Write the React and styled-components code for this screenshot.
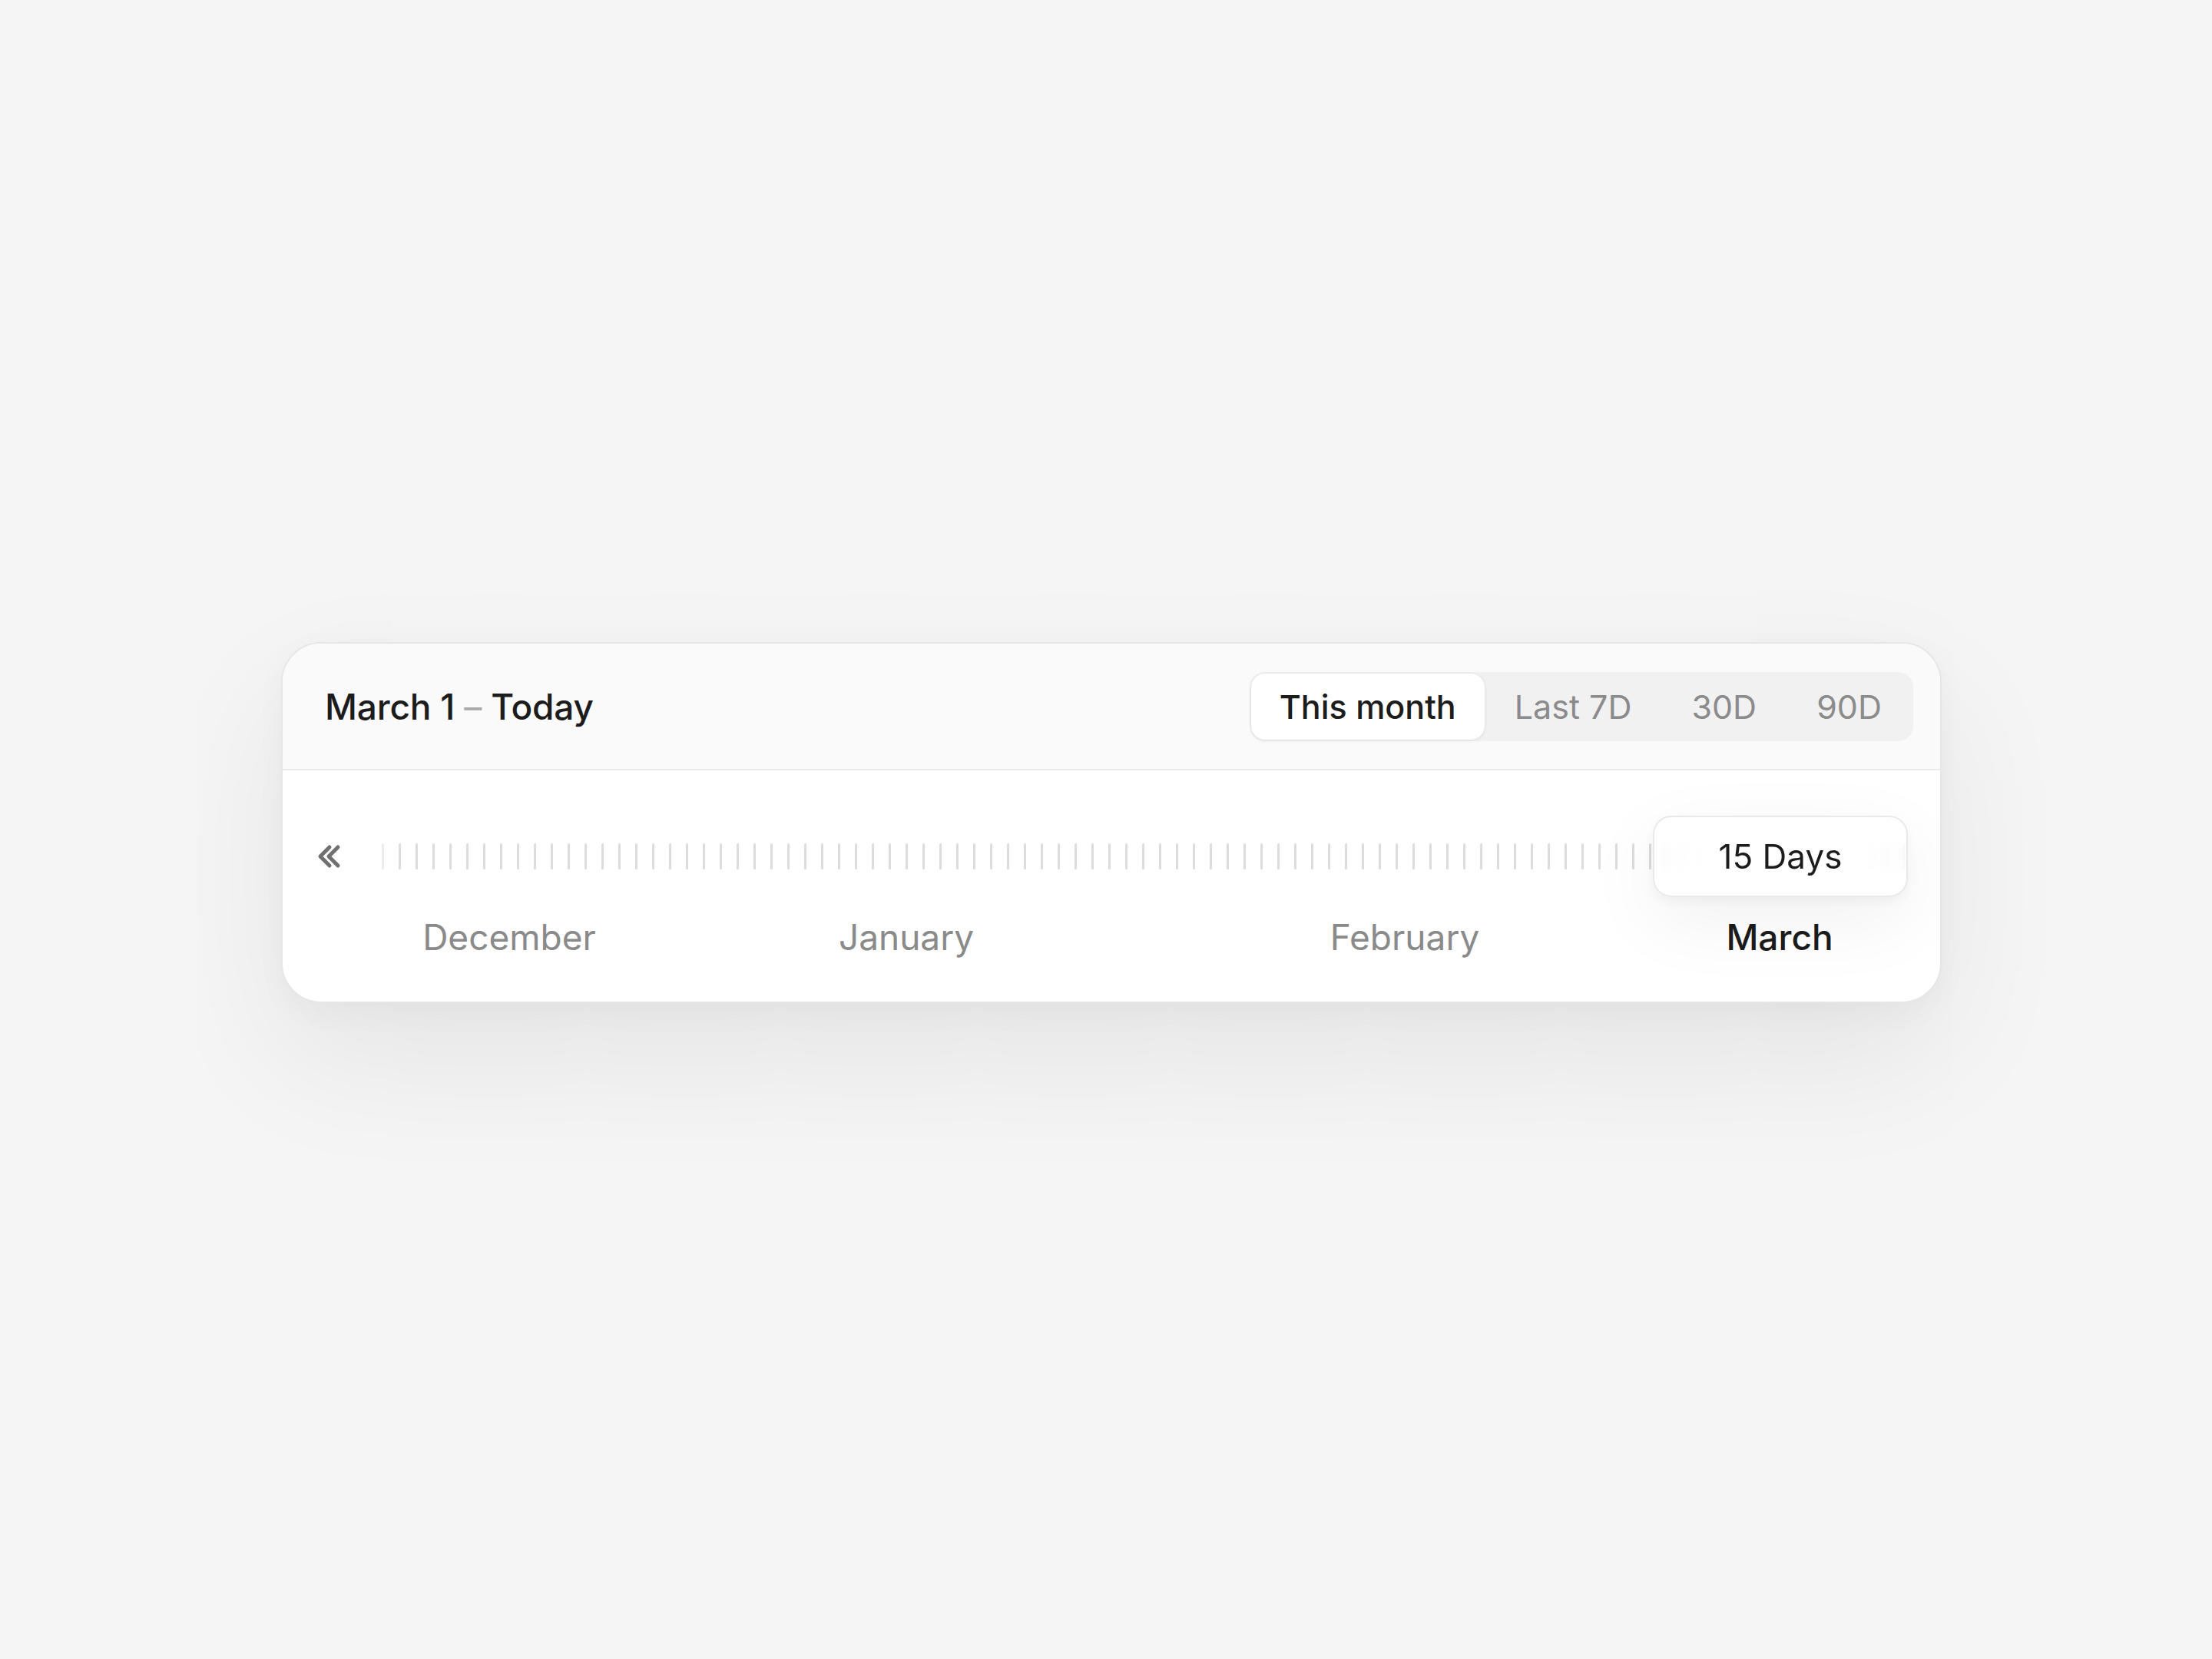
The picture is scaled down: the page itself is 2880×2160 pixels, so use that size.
import React from "react";
import styled, { createGlobalStyle } from "styled-components";

const Global = createGlobalStyle`
  html, body { margin: 0; padding: 0; background: #f5f5f5; }
  body { font-family: Inter, "Noto Sans", sans-serif; -webkit-font-smoothing: antialiased; }
`;

const Page = styled.div`
  min-height: 2160px;
  box-sizing: border-box;
  display: flex;
  flex-direction: column;
  align-items: center;
  padding-top: 836px;
  padding-left: 14px;
`;

const Card = styled.div`
  width: 2162px;
  box-sizing: border-box;
  background: #ffffff;
  border: 2px solid #e6e6e6;
  border-radius: 52px;
  overflow: hidden;
  box-shadow: 0 70px 180px rgba(0, 0, 0, 0.07), 0 12px 40px rgba(0, 0, 0, 0.035);
`;

const Header = styled.div`
  height: 165px;
  box-sizing: border-box;
  display: flex;
  align-items: center;
  justify-content: space-between;
  padding: 0 35px 0 55px;
  background: #fafafa;
  border-bottom: 2px solid #ebebeb;
`;

const Title = styled.div`
  font-size: 46px;
  font-weight: 500;
  color: #1c1c1c;
  letter-spacing: -0.2px;
`;

const Dash = styled.span`
  color: #a9a9a9;
  font-weight: 400;
`;

const Segmented = styled.div`
  display: flex;
  align-items: stretch;
  height: 90px;
  box-sizing: border-box;
  padding: 2px;
  background: #f1f1f1;
  border-radius: 20px;
`;

const Segment = styled.button`
  border: none;
  outline: none;
  font-family: inherit;
  font-size: 43px;
  font-weight: ${(p) => (p.$active ? 500 : 400)};
  color: ${(p) => (p.$active ? "#1c1c1c" : "#8b8b8b")};
  background: ${(p) => (p.$active ? "#ffffff" : "transparent")};
  border-radius: 18px;
  padding: 0 ${(p) => (p.$active ? 37 : 39)}px;
  box-shadow: ${(p) => (p.$active ? "0 1px 5px rgba(0,0,0,0.08), 0 0 0 1px rgba(0,0,0,0.02)" : "none")};
  cursor: pointer;
`;

const Body = styled.div`
  display: flex;
  align-items: flex-start;
  padding: 59px 35px 56px 44px;
`;

const BackButton = styled.button`
  height: 106px;
  width: 75px;
  flex: none;
  display: flex;
  align-items: center;
  justify-content: flex-start;
  border: none;
  background: transparent;
  padding: 0;
  cursor: pointer;
`;

const Track = styled.div`
  display: flex;
  align-items: flex-start;
`;

const Month = styled.div`
  position: relative;
  display: flex;
  flex-direction: column;
  align-items: center;
  width: ${(p) => p.$days * 22}px;
`;

const TickRow = styled.div`
  display: flex;
  align-items: center;
  height: 106px;
  align-self: stretch;
`;

const TickCell = styled.div`
  width: 22px;
  flex: none;
  display: flex;
  justify-content: center;
`;

const Tick = styled.div`
  width: 3px;
  height: 34px;
  border-radius: 2px;
  background: #dcdcdc;
  opacity: ${(p) => p.$fade};
`;

const MonthLabel = styled.div`
  margin-top: 24px;
  margin-left: ${(p) => (p.$current ? 8 : 0)}px;
  font-size: 46px;
  line-height: 56px;
  font-weight: ${(p) => (p.$current ? 500 : 400)};
  color: ${(p) => (p.$current ? "#1c1c1c" : "#8a8a8a")};
  white-space: nowrap;
`;

const RangeBox = styled.div`
  position: absolute;
  top: 0;
  left: 15px;
  width: 332px;
  height: 106px;
  box-sizing: border-box;
  display: flex;
  align-items: center;
  justify-content: center;
  border: 2px solid #e9e9e9;
  border-radius: 24px;
  background: linear-gradient(
    90deg,
    rgba(255, 255, 255, 0.55) 0%,
    rgba(255, 255, 255, 0.9) 22%,
    #ffffff 34%,
    #ffffff 66%,
    rgba(255, 255, 255, 0.9) 78%,
    rgba(255, 255, 255, 0.55) 100%
  );
  backdrop-filter: blur(6px);
  box-shadow: 0 6px 18px rgba(0, 0, 0, 0.05), 0 30px 100px rgba(0, 0, 0, 0.06);
  font-size: 44px;
  font-weight: 400;
  color: #1c1c1c;
`;

const ChevronsLeft = () => (
  <svg width="34" height="32" viewBox="0 0 34 32" fill="none">
    <path d="M17 4 L5 16 L17 28" stroke="#707070" strokeWidth="5" strokeLinecap="round" strokeLinejoin="round" />
    <path d="M28 4 L16 16 L28 28" stroke="#707070" strokeWidth="5" strokeLinecap="round" strokeLinejoin="round" />
  </svg>
);

const months = [
  { name: "December", days: 16 },
  { name: "January", days: 31 },
  { name: "February", days: 28 },
  { name: "March", days: 16, current: true },
];

const tabs = ["This month", "Last 7D", "30D", "90D"];

export default function App() {
  return (
    <>
      <Global />
      <Page>
        <Card>
          <Header>
            <Title>
              March 1 <Dash>–</Dash> Today
            </Title>
            <Segmented>
              {tabs.map((t, i) => (
                <Segment key={t} $active={i === 0}>
                  {t}
                </Segment>
              ))}
            </Segmented>
          </Header>
          <Body>
            <BackButton aria-label="Previous">
              <ChevronsLeft />
            </BackButton>
            <Track>
              {months.map((m, mi) => (
                <Month key={m.name} $days={m.days}>
                  <TickRow>
                    {Array.from({ length: m.days }).map((_, d) => (
                      <TickCell key={d}>
                        <Tick $fade={mi === 0 && d === 0 ? 0.55 : 1} />
                      </TickCell>
                    ))}
                  </TickRow>
                  <MonthLabel $current={m.current}>{m.name}</MonthLabel>
                  {m.current && <RangeBox>15 Days</RangeBox>}
                </Month>
              ))}
            </Track>
          </Body>
        </Card>
      </Page>
    </>
  );
}
